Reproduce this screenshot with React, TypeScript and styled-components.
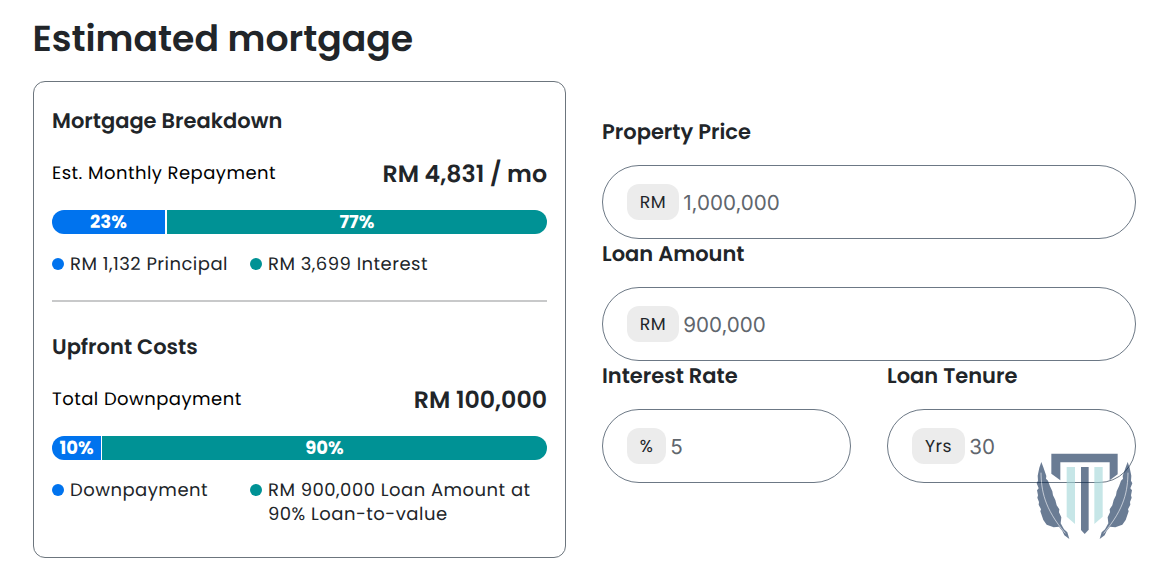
import React from 'react';
import styled, { createGlobalStyle } from 'styled-components';

const GlobalStyle = createGlobalStyle`
    * {
        box-sizing: border-box;
    }

    body {
        background: #fff;
        color: #212529;
        font-family: Poppins, Inter, sans-serif;
        margin: 0;
        text-rendering: geometricPrecision;
    }
`;

const Page = styled.main`
    padding: 15px 29px 19px 33px;
`;

const PageTitle = styled.h1`
    font-size: 36.2px;
    font-weight: 600;
    line-height: 48px;
    margin: 0 0 18px -0.5px;
`;

const Columns = styled.div`
    display: grid;
    gap: 36px;
    grid-template-columns: 533px 534px;
`;

const BreakdownCard = styled.section`
    border: 1px solid #6c757d;
    border-radius: 12px;
    height: 477px;
    padding: 24px 18px 0;
`;

const SectionTitle = styled.h2`
    font-size: 21px;
    font-weight: 600;
    line-height: 32px;
    margin: 0;
`;

const SummaryRow = styled.div`
    align-items: center;
    display: flex;
    height: 36px;
    justify-content: space-between;
    margin: 18px 0;
`;

const SummaryLabel = styled.span`
    color: #000;
    font-size: 18px;
    letter-spacing: 0.45px;
    padding-bottom: 2px;
`;

const SummaryAmount = styled.span`
    font-size: 23.7px;
    font-weight: 600;
`;

const Bar = styled.div`
    border-radius: 12px;
    display: flex;
    height: 24px;
    overflow: hidden;
`;

const BarPart = styled.div<{ color: string; divider?: number }>`
    background: ${props => props.color};
    border-right: ${props => props.divider || 0}px solid #fff;
    color: #fff;
    font-size: 18px;
    font-weight: 700;
    line-height: 25px;
    text-align: center;
`;

const Legend = styled.div`
    display: grid;
    grid-template-columns: 198px 297px;
    margin-top: 19px;
`;

const LegendItem = styled.div`
    color: #212529;
    display: flex;
    font-size: 18px;
    letter-spacing: 0.48px;
    line-height: 24px;
    white-space: pre-line;
`;

const Dot = styled.span<{ color: string }>`
    background: ${props => props.color};
    border-radius: 50%;
    flex: none;
    height: 12px;
    margin: 5px 6px 0 0;
    width: 12px;
`;

const Divider = styled.hr`
    border: 0;
    border-top: 2px solid #c8c9ca;
    margin: 23px 0 30px;
`;

const Form = styled.form`
    padding-top: 36px;
`;

const FieldRow = styled.div`
    display: grid;
    gap: 36px;
    grid-template-columns: 1fr 1fr;
`;

const Field = styled.label`
    display: block;
    height: 122px;
`;

const FieldLabel = styled(SectionTitle).attrs({ as: 'span' })`
    display: block;
    margin-bottom: 16px;
`;

const InputBox = styled.span`
    align-items: center;
    border: 1px solid #6c7885;
    border-radius: 37px;
    display: flex;
    height: 74px;
    padding: 0 24px;
`;

const Unit = styled.span<{ width: number }>`
    background: #ececec;
    border-radius: 12px;
    flex: none;
    font-size: 17.3px;
    height: 36px;
    letter-spacing: 0.5px;
    line-height: 38px;
    text-align: center;
    width: ${props => props.width}px;
`;

const Input = styled.input`
    background: transparent;
    border: 0;
    color: #60666d;
    font-family: Inter, sans-serif;
    font-size: 20.6px;
    min-width: 0;
    outline: 0;
    padding: 1px 0 0 4.2px;
    text-rendering: geometricPrecision;
    width: 100%;
`;

const Watermark = styled.svg`
    bottom: 35px;
    height: 90px;
    opacity: 0.6;
    pointer-events: none;
    position: fixed;
    right: 31px;
    width: 100px;
`;

const BLUE = '#0073ee';
const TEAL = '#009295';

interface AmountFieldProps {
    label: string;
    unit: string;
    unitWidth: number;
    value: string;
}

const AmountField = ({ label, unit, unitWidth, value }: AmountFieldProps) => (
    <Field>
        <FieldLabel>{label}</FieldLabel>
        <InputBox>
            <Unit width={unitWidth}>{unit}</Unit>
            <Input defaultValue={value} />
        </InputBox>
    </Field>
);

const Feather = () => (
    <>
        <path
            d="M64 66 L70 82 L79 108 L78 116 L84 122 L90 139 L97 154 L99 166 L106 180 L110 196 L118 208 L117 217 L124 232 L122 250 L132 268 L142 277 L148 297 L133 286 L127 273 L117 260 L101 262 L80 254 L70 240 L61 214 L63 208 L56 194 L57 186 L52 173 L54 166 L51 151 L56 145 L50 130 L54 122 L53 107 L58 83 Z"
            fill="#08254e"
        />
        <path d="M63 98 C64 150 72 205 136 280" fill="none" stroke="#fff" strokeWidth="1.8" />
    </>
);

const LogoWatermark = () => (
    <Watermark viewBox="42 36 300 270">
        <path d="M94 41 H293 V103 L269 121 V67 H121 V121 L94 101 Z" fill="#08254e" />
        <path d="M140 81 H165 V252 L140 230 Z M248 81 H223 V252 L248 230 Z" fill="#a0d5d7" />
        <path d="M183 81 H206 V269 L194 282 L183 270 Z" fill="#08254e" />
        <Feather />
        <g transform="translate(387 0) scale(-1 1)">
            <Feather />
        </g>
    </Watermark>
);

const App = () => (
    <>
        <GlobalStyle />
        <Page>
            <PageTitle>Estimated mortgage</PageTitle>
            <Columns>
                <BreakdownCard>
                    <SectionTitle>Mortgage Breakdown</SectionTitle>
                    <SummaryRow>
                        <SummaryLabel>Est. Monthly Repayment</SummaryLabel>
                        <SummaryAmount>RM 4,831 / mo</SummaryAmount>
                    </SummaryRow>
                    <Bar>
                        <BarPart color={BLUE} divider={2} style={{ width: '23.2%' }}>
                            23%
                        </BarPart>
                        <BarPart color={TEAL} style={{ width: '76.8%' }}>
                            77%
                        </BarPart>
                    </Bar>
                    <Legend>
                        <LegendItem>
                            <Dot color={BLUE} />
                            RM 1,132 Principal
                        </LegendItem>
                        <LegendItem>
                            <Dot color={TEAL} />
                            RM 3,699 Interest
                        </LegendItem>
                    </Legend>
                    <Divider />
                    <SectionTitle>Upfront Costs</SectionTitle>
                    <SummaryRow>
                        <SummaryLabel>Total Downpayment</SummaryLabel>
                        <SummaryAmount>RM 100,000</SummaryAmount>
                    </SummaryRow>
                    <Bar>
                        <BarPart color={BLUE} divider={1} style={{ width: '10.1%' }}>
                            10%
                        </BarPart>
                        <BarPart color={TEAL} style={{ width: '89.9%' }}>
                            90%
                        </BarPart>
                    </Bar>
                    <Legend>
                        <LegendItem>
                            <Dot color={BLUE} />
                            Downpayment
                        </LegendItem>
                        <LegendItem>
                            <Dot color={TEAL} />
                            {'RM 900,000 Loan Amount at\n90% Loan-to-value'}
                        </LegendItem>
                    </Legend>
                </BreakdownCard>
                <Form>
                    <AmountField label="Property Price" unit="RM" unitWidth={52} value="1,000,000" />
                    <AmountField label="Loan Amount" unit="RM" unitWidth={52} value="900,000" />
                    <FieldRow>
                        <AmountField label="Interest Rate" unit="%" unitWidth={39} value="5" />
                        <AmountField label="Loan Tenure" unit="Yrs" unitWidth={53} value="30" />
                    </FieldRow>
                </Form>
            </Columns>
        </Page>
        <LogoWatermark />
    </>
);

export default App;
